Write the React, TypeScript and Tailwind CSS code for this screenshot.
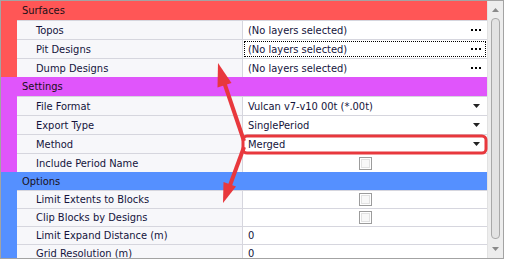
type Row = { label: string; kind: "layers" | "combo" | "check" | "text"; value?: string; focus?: boolean };

type Group = { title: string; color: string; rowH: string; headH: string; rows: Row[] };

const groups: Group[] = [
  {
    title: "Surfaces",
    color: "bg-[#ff5656]",
    headH: "h-[19px]",
    rowH: "h-[19px]",
    rows: [
      { label: "Topos", kind: "layers", value: "(No layers selected)" },
      { label: "Pit Designs", kind: "layers", value: "(No layers selected)", focus: true },
      { label: "Dump Designs", kind: "layers", value: "(No layers selected)" },
    ],
  },
  {
    title: "Settings",
    color: "bg-[#e055fb]",
    headH: "h-[19px]",
    rowH: "h-[19px]",
    rows: [
      { label: "File Format", kind: "combo", value: "Vulcan v7-v10 00t (*.00t)" },
      { label: "Export Type", kind: "combo", value: "SinglePeriod" },
      { label: "Method", kind: "combo", value: "Merged" },
      { label: "Include Period Name", kind: "check" },
    ],
  },
  {
    title: "Options",
    color: "bg-[#5590ff]",
    headH: "h-[18px]",
    rowH: "h-[18px]",
    rows: [
      { label: "Limit Extents to Blocks", kind: "check" },
      { label: "Clip Blocks by Designs", kind: "check" },
      { label: "Limit Expand Distance (m)", kind: "text", value: "0" },
      { label: "Grid Resolution (m)", kind: "text", value: "0" },
    ],
  },
];

function Dots() {
  return (
    <div className="flex gap-[2px] mr-[4px]">
      <div className="w-[2px] h-[2px] bg-black" />
      <div className="w-[2px] h-[2px] bg-black" />
      <div className="w-[2px] h-[2px] bg-black" />
    </div>
  );
}

function Caret() {
  return (
    <svg width="7" height="4" viewBox="0 0 7 4" className="mr-[5px]">
      <polygon points="0,0 7,0 3.5,4" fill="#222" />
    </svg>
  );
}

function Check() {
  return (
    <div className="w-[13px] h-[13px] border border-[#9c9c9c] bg-white p-[1px]">
      <div className="w-full h-full border border-[#e2e2e2] bg-[#f8f8f8]" />
    </div>
  );
}

function ValueCell({ row }: { row: Row }) {
  if (row.kind === "check") {
    return (
      <div className="flex-1 h-full flex items-center justify-center bg-white">
        <Check />
      </div>
    );
  }
  return (
    <div className="flex-1 h-full flex bg-white p-[1px]">
      <div
        className={`flex-1 flex items-center justify-between pl-[3px] ${
          row.focus ? "border border-dotted border-black" : "border border-transparent"
        }`}
      >
        <span className="text-[#14143c] whitespace-nowrap leading-none">{row.value}</span>
        {row.kind === "layers" && <Dots />}
        {row.kind === "combo" && <Caret />}
      </div>
    </div>
  );
}

export default function App() {
  return (
    <div
      className="relative w-[505px] h-[260px] bg-white overflow-hidden text-[11px] leading-none"
      style={{ fontFamily: '"DejaVu Sans Condensed", "DejaVu Sans", sans-serif' }}
    >
      <div className="w-[504px] h-[259px] border border-[#a3a3a3] flex overflow-hidden">
        {/* Grid */}
        <div className="w-[486px] flex flex-col">
          {groups.map((g) => (
            <div key={g.title} className={`${g.color} flex flex-col`}>
              <div className={`${g.headH} flex items-center pl-[21px] text-[#1a1018]`}>
                {g.title}
              </div>
              {g.rows.map((r) => (
                <div key={r.label} className={`${g.rowH} ml-[16px] border-t border-[#d6d6de] flex`}>
                  <div className="h-full w-[226px] flex items-center pl-[19px] bg-[#f7f7fa] text-[#14143c] border-r border-[#d6d6de]">
                    {r.label}
                  </div>
                  <ValueCell row={r} />
                </div>
              ))}
            </div>
          ))}
        </div>

        {/* Scrollbar */}
        <div className="w-[16px] bg-[#ededed] flex flex-col items-center border-l border-[#e2e2e2]">
          <div className="h-[17px] shrink-0 flex items-center justify-center">
            <svg width="7" height="4" viewBox="0 0 7 4">
              <polygon points="0,4 7,4 3.5,0" fill="#8a8a8a" />
            </svg>
          </div>
          <div className="w-[9px] h-[221px] shrink-0 rounded-[4px] border border-[#a9a9a9] bg-[#e3e3e3]" />
          <div className="flex-1 flex items-center justify-center">
            <svg width="7" height="4" viewBox="0 0 7 4">
              <polygon points="0,0 7,0 3.5,4" fill="#8a8a8a" />
            </svg>
          </div>
        </div>
      </div>

      {/* Annotation overlay */}
      <svg className="absolute left-0 top-0 pointer-events-none" width="505" height="260">
        <rect x="243" y="136" width="243" height="17" rx="4" fill="none" stroke="#e8383d" strokeWidth="3" />
        <line x1="244" y1="141" x2="224" y2="82" stroke="#e8383d" strokeWidth="4" />
        <polygon points="218,63 231.5,83 217.5,87.5" fill="#e8383d" />
        <line x1="244" y1="147" x2="229" y2="188" stroke="#e8383d" strokeWidth="4" />
        <polygon points="223,203 236,186.5 223.5,182" fill="#e8383d" />
      </svg>
    </div>
  );
}
